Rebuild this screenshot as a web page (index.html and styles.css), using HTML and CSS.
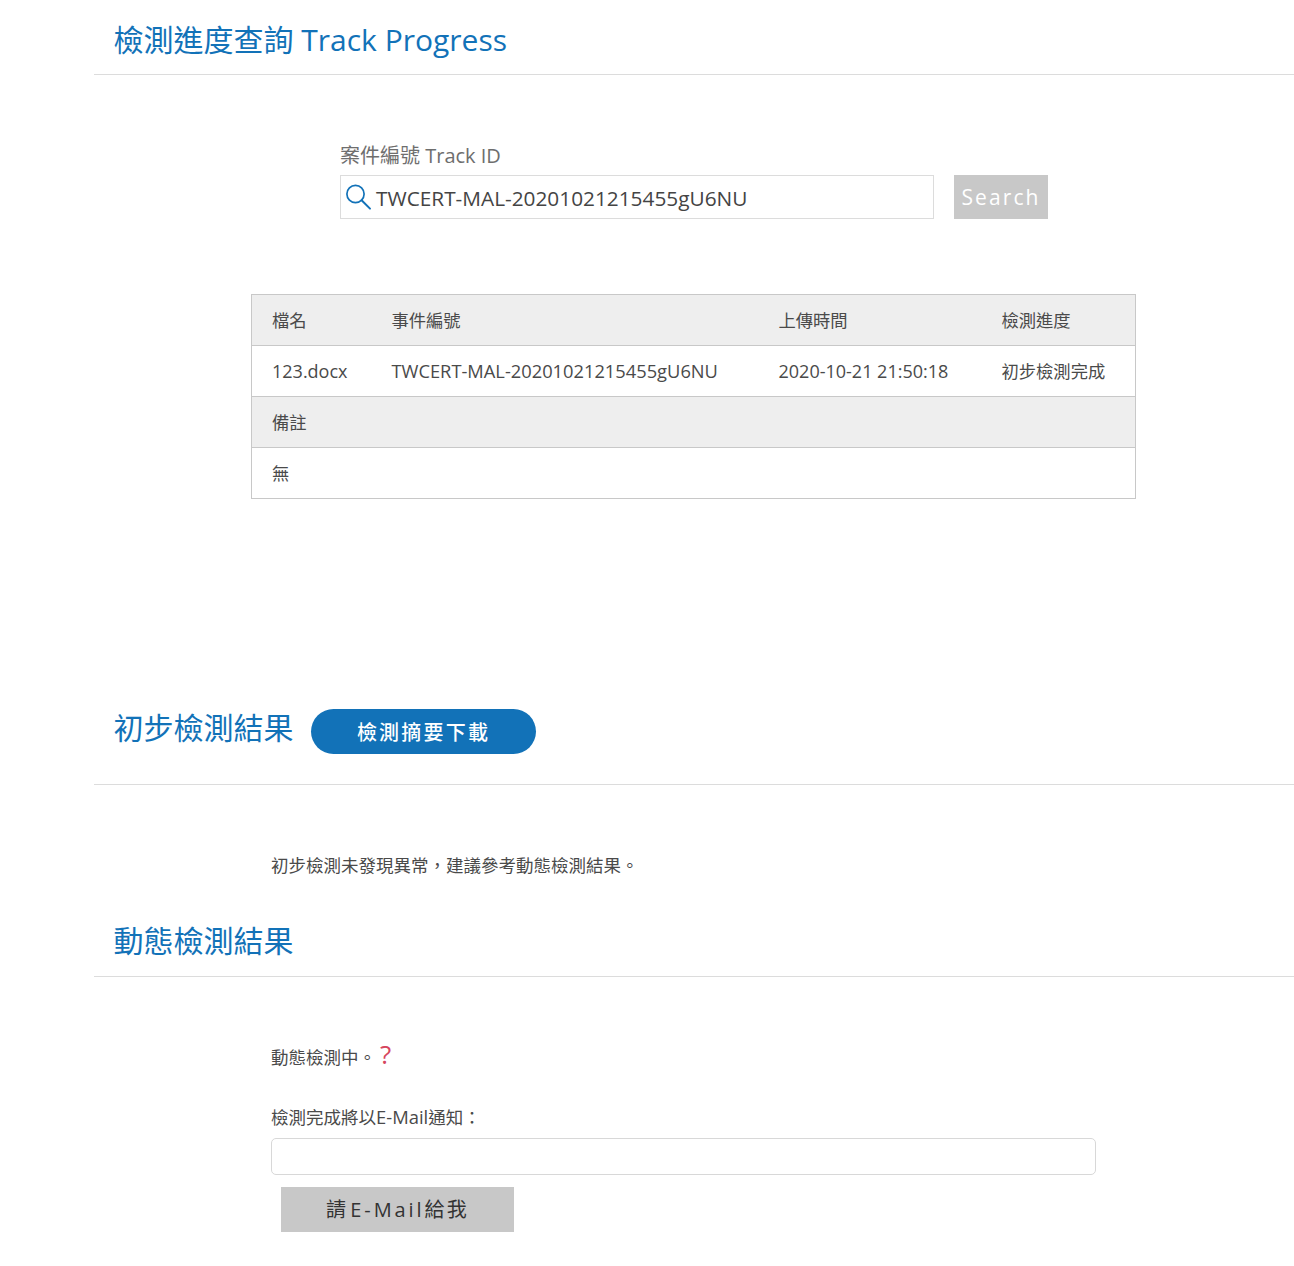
FILE: index.html
```html
<!DOCTYPE html>
<html lang="zh-Hant">
<head>
<meta charset="utf-8">
<title>檢測進度查詢 Track Progress</title>
<link rel="stylesheet" href="styles.css">
</head>
<body>
<main class="page">
  <header class="head head-first">
    <h1 class="title">檢測進度查詢 Track Progress</h1>
  </header>

  <form class="search">
    <label class="search-label">案件編號 Track ID</label>
    <div class="search-row">
      <div class="search-box">
        <svg class="search-icon" width="28" height="28" viewBox="0 0 28 28" fill="none" stroke="#1272b8" stroke-linecap="round">
          <circle cx="11.5" cy="11" r="8.6" stroke-width="1.7"/>
          <path d="M17.6 17.2 26 25.6" stroke-width="2"/>
        </svg>
        <span class="search-value">TWCERT-MAL-20201021215455gU6NU</span>
      </div>
      <div class="search-btn">Search</div>
    </div>
  </form>

  <table class="result">
    <tr class="shade">
      <td class="col1">檔名</td><td class="col2">事件編號</td><td class="col3">上傳時間</td><td class="col4">檢測進度</td>
    </tr>
    <tr>
      <td class="latin">123.docx</td><td class="latin track">TWCERT-MAL-20201021215455gU6NU</td><td class="latin">2020-10-21 21:50:18</td><td>初步檢測完成</td>
    </tr>
    <tr class="shade"><td colspan="4">備註</td></tr>
    <tr><td colspan="4">無</td></tr>
  </table>

  <header class="head head-second">
    <h2 class="title">初步檢測結果</h2>
    <div class="pill">檢測摘要下載</div>
  </header>
  <p class="note note-first">初步檢測未發現異常，建議參考動態檢測結果。</p>

  <header class="head head-third">
    <h2 class="title">動態檢測結果</h2>
  </header>
  <p class="note note-status">動態檢測中。<span class="help">?</span></p>
  <p class="note note-mail">檢測完成將以<span class="latin">E-Mail</span>通知：</p>
  <div class="mail-input"></div>
  <div class="mail-btn">請<span class="mail-latin">E-Mail</span>給我</div>
</main>
</body>
</html>
```
FILE: styles.css
```css
* { box-sizing: border-box; }
html, body { margin: 0; padding: 0; background: #fff; }
body {
  font-family: "Open Sans", "Noto Sans CJK TC", sans-serif;
  color: #4a4a4a;
  height: 1266px;
  overflow: hidden;
}
.page { padding-left: 94px; }
.head {
  display: flex;
  align-items: flex-start;
  padding-left: 19.5px;
  border-bottom: 1px solid #dcdcdc;
}
.title {
  margin: 0;
  font-size: 30px;
  line-height: 40px;
  font-weight: 400;
  color: #1272b8;
  white-space: nowrap;
}
.head-first { height: 75px; padding-top: 20px; }
.head-second { height: 76px; margin-top: 210px; }
.head-second .title { margin-top: -1px; }
.head-third { height: 57px; padding-top: 1px; }

.search { margin: 69px 0 0 246px; }
.search-label { display: block; font-size: 20px; line-height: 24px; color: #6e6e6e; height: 31px; }
.search-row { display: flex; gap: 20px; }
.search-box {
  width: 594px; height: 44px;
  border: 1px solid #dcdcdc;
  display: flex; align-items: center; gap: 4px;
  padding-left: 3px;
}
.search-icon { flex: none; }
.search-value { font-size: 20.8px; color: #444; white-space: nowrap; padding-top: 2px; }
.search-btn {
  width: 94px; height: 44px;
  background: #c8c8c8; color: #fff;
  font-size: 21px; letter-spacing: 2.1px;
  text-align: center; line-height: 45px;
}

.result {
  margin: 75px 0 0 157px;
  width: 885px;
  border-collapse: collapse;
  table-layout: fixed;
  font-size: 17.3px;
  color: #4a4a4a;
}
.result td { height: 51px; padding: 0 0 2px 20px; border: 1px solid #c8c8c8; border-left: 0; border-right: 0; white-space: nowrap; }
.result td.latin { font-size: 18px; padding-bottom: 1px; }
.result td.track { font-size: 18.3px; }
.result tr td:first-child { border-left: 1px solid #c8c8c8; }
.result tr td:last-child { border-right: 1px solid #c8c8c8; }
.shade td { background: #eeeeee; }
.col1 { width: 120px; }
.col2 { width: 387px; }
.col3 { width: 223px; }

.pill {
  margin: 0 0 0 17.5px;
  width: 225px; height: 45px;
  border-radius: 23px;
  background: #1272b8; color: #fff;
  font-size: 20px; letter-spacing: 2.2px;
  text-align: center; line-height: 47px;
  font-weight: 500;
}
.note { margin: 0 0 0 177px; font-size: 17.5px; line-height: 24px; color: #4a4a4a; }
.note .latin { font-size: 18.4px; }
.note-first { margin-top: 68px; height: 67px; }
.note-status { margin-top: 65px; height: 24px; }
.help { color: #d6455d; font-size: 26px; margin-left: 4px; }
.note-mail { margin-top: 39px; }
.mail-input {
  margin: 9px 0 0 177px;
  width: 825px; height: 37px;
  border: 1px solid #d8d8d8; border-radius: 5px;
}
.mail-btn {
  margin: 12px 0 0 187px;
  width: 233px; height: 45px;
  background: #c8c8c8; color: #333;
  font-size: 20px; letter-spacing: 2.2px;
  text-align: center; line-height: 46px;
}
.mail-latin { letter-spacing: 2.9px; padding-left: 2px; }
```
